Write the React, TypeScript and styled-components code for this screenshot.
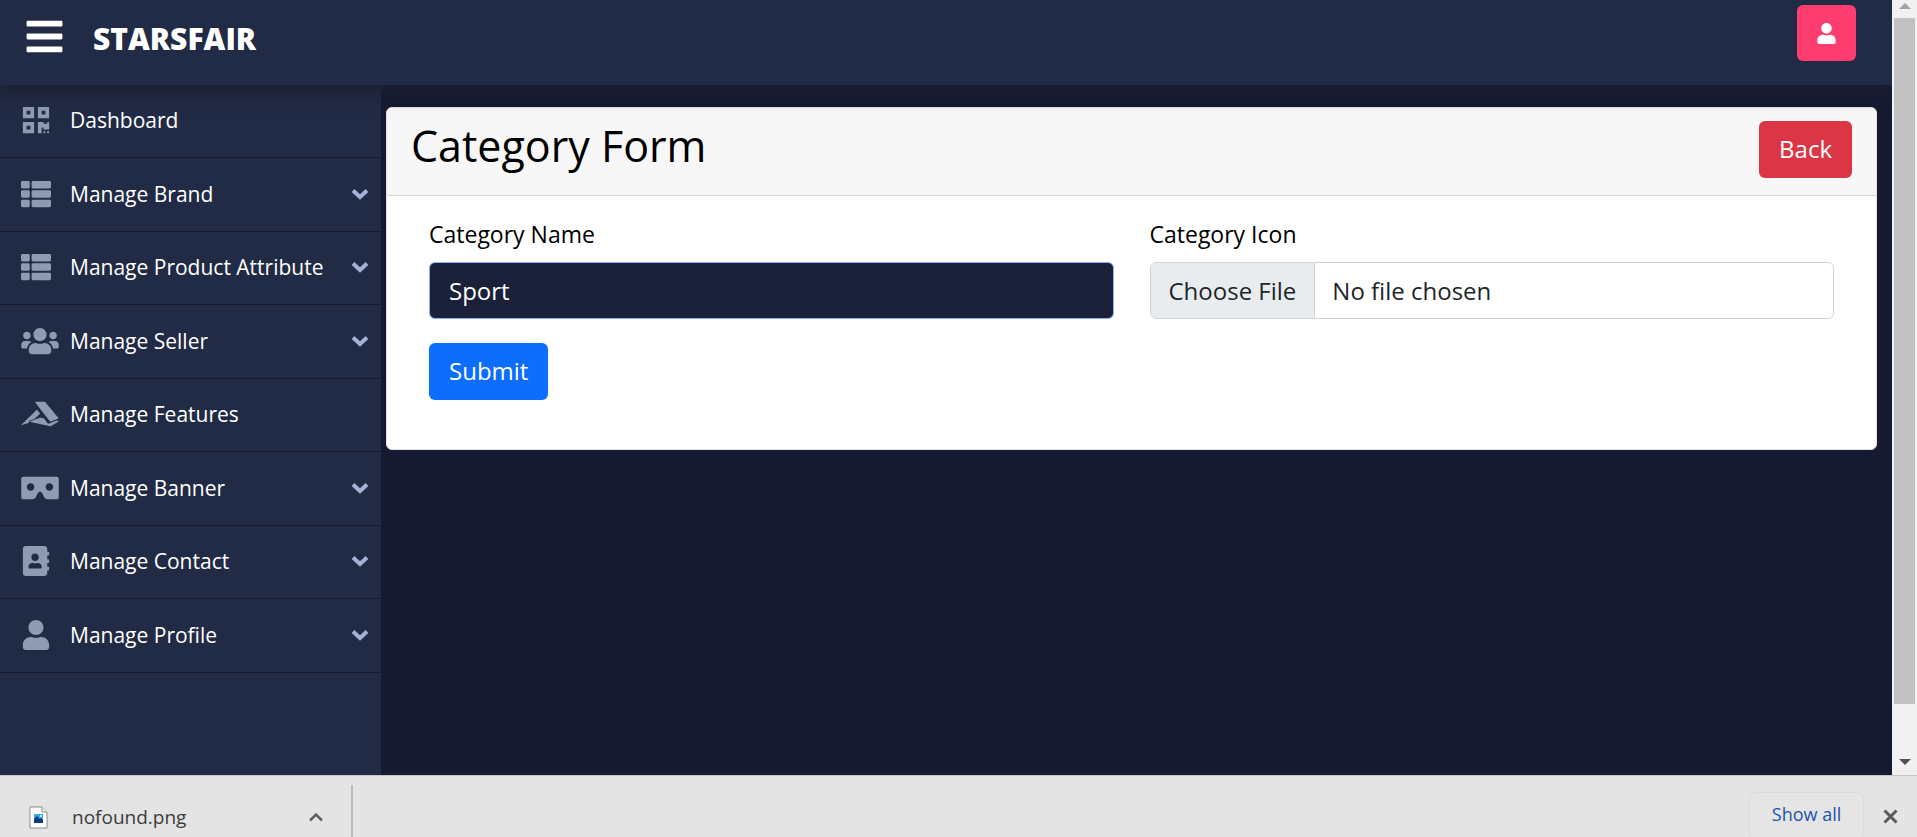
import React from "react";
import styled, { createGlobalStyle } from "styled-components";
import {
  FaAccusoft,
  FaAddressBook,
  FaBars,
  FaQrcode,
  FaThList,
  FaUser,
  FaUsers,
  FaVrCardboard,
} from "react-icons/fa";
import type { IconType } from "react-icons";

const GlobalStyle = createGlobalStyle`
  *, *::before, *::after { box-sizing: border-box; }
  body {
    margin: 0;
    overflow: hidden;
    background: #151a30;
    font-family: "Open Sans", sans-serif;
  }
  button, input { font-family: inherit; }
`;

const Window = styled.div`
  display: grid;
  grid-template-columns: minmax(0, 1fr) 25px;
  grid-template-rows: minmax(0, 1fr) 62px;
  height: 100vh;
`;

const Page = styled.div`
  display: flex;
  flex-direction: column;
  min-height: 0;
  overflow: hidden;
`;

const Header = styled.header`
  position: relative;
  z-index: 1;
  flex: none;
  display: flex;
  align-items: flex-start;
  justify-content: space-between;
  height: 85px;
  padding: 5px 36px 0 24px;
  background: #222b45;
  box-shadow: 0 8px 16px #1a1f33;
`;

const Brand = styled.div`
  display: flex;
  align-items: center;
  gap: 28px;
  padding-top: 8px;
`;

const MenuButton = styled.button`
  display: flex;
  padding: 0;
  border: 0;
  background: none;
  color: #fff;
  font-size: 41px;
`;

const BrandName = styled.a`
  color: #fff;
  font-size: 30px;
  font-weight: 800;
  line-height: 40px;
  padding-top: 6px;
  text-decoration: none;
`;

const AccountButton = styled.button`
  display: flex;
  align-items: center;
  justify-content: center;
  width: 59px;
  height: 56px;
  padding: 0;
  border: 0;
  border-radius: 6px;
  background: #ff3d71;
  color: #fff;
  font-size: 21px;
`;

const Columns = styled.div`
  flex: 1;
  display: flex;
  min-height: 0;
`;

const Sidebar = styled.nav`
  flex: none;
  width: 381px;
  background: #222b45;
`;

const Menu = styled.ul`
  margin: 0;
  padding: 0;
  list-style: none;
`;

const MenuItem = styled.li`
  height: 73px;
  border-bottom: 1px solid #151a30;

  &:nth-child(even) {
    height: 74px;
  }
`;

const MenuLink = styled.a<{ $wide?: boolean }>`
  display: grid;
  grid-template-columns: 49px 1fr 18px;
  align-items: center;
  height: 100%;
  padding: 0 12px 2px 21px;
  color: #fff;
  font-size: 21px;
  font-weight: 500;
  text-decoration: none;

  > svg:first-child {
    width: ${(p) => (p.$wide ? 38 : 30)}px;
    height: 30px;
    color: #8f9bb3;
  }
`;

const Main = styled.main`
  flex: 1;
  min-width: 0;
  padding: 22px 15px 0 5px;
`;

const Card = styled.section`
  overflow: hidden;
  border: 1px solid #dfe1e4;
  border-radius: 6px;
  background: #fff;
`;

const CardHeader = styled.div`
  display: flex;
  align-items: flex-start;
  justify-content: space-between;
  padding: 13px 24px 17px;
  border-bottom: 1px solid #d5d5d5;
  background: #f7f7f7;
`;

const Title = styled.h1`
  margin: 0;
  color: #000;
  font-size: 43px;
  font-weight: 500;
  line-height: 50px;
`;

const Button = styled.button<{ $color: string }>`
  padding: 10px 20px 11px;
  border: 0;
  border-radius: 6px;
  background: ${(p) => p.$color};
  color: #fff;
  font-size: 24px;
  line-height: 36px;
`;

const Form = styled.form`
  padding: 20px 42px 49px;
`;

const Fields = styled.div`
  display: grid;
  grid-template-columns: 1fr 1fr;
  gap: 36px;
  margin-bottom: 24px;
`;

const Field = styled.div`
  display: flex;
  flex-direction: column;
  gap: 10px;
  min-width: 0;
`;

const Label = styled.label`
  color: #000;
  font-size: 23px;
  line-height: 36px;
`;

const TextInput = styled.input`
  width: 100%;
  height: 57px;
  padding: 0 19px;
  border: 1px solid #86b7fe;
  border-radius: 6px;
  outline: 0;
  background: #1a2138;
  color: #fff;
  caret-color: #000;
  font-size: 24px;
`;

const FileInput = styled.input`
  width: 100%;
  height: 57px;
  padding: 0;
  border: 1px solid #ced4da;
  border-radius: 6px;
  background: #fff;
  color: #212529;
  font-size: 24px;
  line-height: 55px;

  &::file-selector-button {
    height: 55px;
    margin: 0 17px 0 0;
    padding: 0 18px;
    border: 0;
    border-right: 1px solid #ced4da;
    border-radius: 5px 0 0 5px;
    background: #e9ecef;
    color: #212529;
    font: inherit;
  }
`;

const ScrollTrack = styled.div`
  display: grid;
  grid-template-rows: 18px 686fr 44fr 27px;
  justify-items: center;
  background: #f1f1f1;
`;

const ScrollThumb = styled.div`
  width: 21px;
  background: #c1c1c1;
`;

const ArrowUp = styled.svg`
  margin-top: 3px;
`;

const ArrowDown = styled.svg`
  grid-row: 4;
  margin-top: 11px;
`;

const Shelf = styled.footer`
  grid-column: 1 / -1;
  display: flex;
  align-items: flex-start;
  justify-content: space-between;
  overflow: hidden;
  border-top: 1px solid #c6c6c8;
  background: #e4e4e4;
`;

const Download = styled.div`
  display: flex;
  align-items: center;
  width: 353px;
  height: 64px;
  margin-top: 9px;
  padding: 0 28px 0 29px;
  border-right: 2px solid #bababa;
`;

const FileName = styled.span`
  flex: 1;
  margin-left: 24px;
  color: #3c3c3c;
  font-size: 19px;
  line-height: 30px;
`;

const IconButton = styled.button`
  display: flex;
  padding: 0;
  border: 0;
  background: none;
`;

const ShelfActions = styled.div`
  display: flex;
  align-items: center;
  gap: 19px;
  padding: 16px 19px 0 0;
`;

const ShowAll = styled.button`
  width: 115px;
  height: 48px;
  padding: 0 0 4px;
  border: 1px solid #dcdcdc;
  border-radius: 6px;
  background: #e5e5e5;
  color: #1a55ac;
  font-size: 18px;
  font-weight: 500;
`;

const Chevron = () => (
  <svg width="18" height="12" viewBox="0 0 18 12" fill="none" aria-hidden="true">
    <path d="M2 2.5 9 9l7-6.5" stroke="#a6b1d6" strokeWidth="4" />
  </svg>
);

const PictureFile = () => (
  <svg width="19" height="23" viewBox="0 0 19 23" aria-hidden="true">
    <path d="M1 1h12l5 5v16H1z" fill="#fff" stroke="#8b8b8b" />
    <path d="M13 1v5h5" fill="#f3f3f3" stroke="#8b8b8b" />
    <path d="M5 8h9v9H5z" fill="#39a5e8" />
    <path d="M5 13l3-3 3 3 1-1 2 2v3H5z" fill="#0c3c80" />
    <circle cx="12" cy="10" r="1" fill="#fff" />
  </svg>
);

const items: { label: string; icon: IconType; wide?: boolean; expandable?: boolean }[] = [
  { label: "Dashboard", icon: FaQrcode },
  { label: "Manage Brand", icon: FaThList, expandable: true },
  { label: "Manage Product Attribute", icon: FaThList, expandable: true },
  { label: "Manage Seller", icon: FaUsers, wide: true, expandable: true },
  { label: "Manage Features", icon: FaAccusoft, wide: true },
  { label: "Manage Banner", icon: FaVrCardboard, wide: true, expandable: true },
  { label: "Manage Contact", icon: FaAddressBook, expandable: true },
  { label: "Manage Profile", icon: FaUser, expandable: true },
];

export default function App() {
  return (
    <>
      <GlobalStyle />
      <Window>
        <Page>
          <Header>
            <Brand>
              <MenuButton type="button" aria-label="Toggle menu">
                <FaBars />
              </MenuButton>
              <BrandName href="#">STARSFAIR</BrandName>
            </Brand>
            <AccountButton type="button" aria-label="Account">
              <FaUser />
            </AccountButton>
          </Header>
          <Columns>
            <Sidebar>
              <Menu>
                {items.map(({ label, icon: Icon, wide, expandable }) => (
                  <MenuItem key={label}>
                    <MenuLink href="#" $wide={wide}>
                      <Icon />
                      <span>{label}</span>
                      {expandable && <Chevron />}
                    </MenuLink>
                  </MenuItem>
                ))}
              </Menu>
            </Sidebar>
            <Main>
              <Card>
                <CardHeader>
                  <Title>Category Form</Title>
                  <Button type="button" $color="#dc3545">
                    Back
                  </Button>
                </CardHeader>
                <Form onSubmit={(e) => e.preventDefault()}>
                  <Fields>
                    <Field>
                      <Label htmlFor="category-name">Category Name</Label>
                      <TextInput id="category-name" type="text" defaultValue="Sport" autoFocus />
                    </Field>
                    <Field>
                      <Label htmlFor="category-icon">Category Icon</Label>
                      <FileInput id="category-icon" type="file" />
                    </Field>
                  </Fields>
                  <Button type="submit" $color="#0d6efd">
                    Submit
                  </Button>
                </Form>
              </Card>
            </Main>
          </Columns>
        </Page>
        <ScrollTrack aria-hidden="true">
          <ArrowUp width="12" height="6" viewBox="0 0 12 6">
            <path d="M6 0l6 6H0z" fill="#a3a3a3" />
          </ArrowUp>
          <ScrollThumb />
          <ArrowDown width="12" height="6" viewBox="0 0 12 6">
            <path d="M6 6l6-6H0z" fill="#505050" />
          </ArrowDown>
        </ScrollTrack>
        <Shelf>
          <Download>
            <PictureFile />
            <FileName>nofound.png</FileName>
            <IconButton type="button" aria-label="Download options">
              <svg width="14" height="10" viewBox="0 0 14 10" fill="none">
                <path d="M1 8.500l6-6 6 6" stroke="#5f6368" strokeWidth="2.500" />
              </svg>
            </IconButton>
          </Download>
          <ShelfActions>
            <ShowAll type="button">Show all</ShowAll>
            <IconButton type="button" aria-label="Close">
              <svg width="15" height="15" viewBox="0 0 15 15" fill="none">
                <path d="M1.500 1.500l12 12m0-12l-12 12" stroke="#5a5a5a" strokeWidth="3" />
              </svg>
            </IconButton>
          </ShelfActions>
        </Shelf>
      </Window>
    </>
  );
}
